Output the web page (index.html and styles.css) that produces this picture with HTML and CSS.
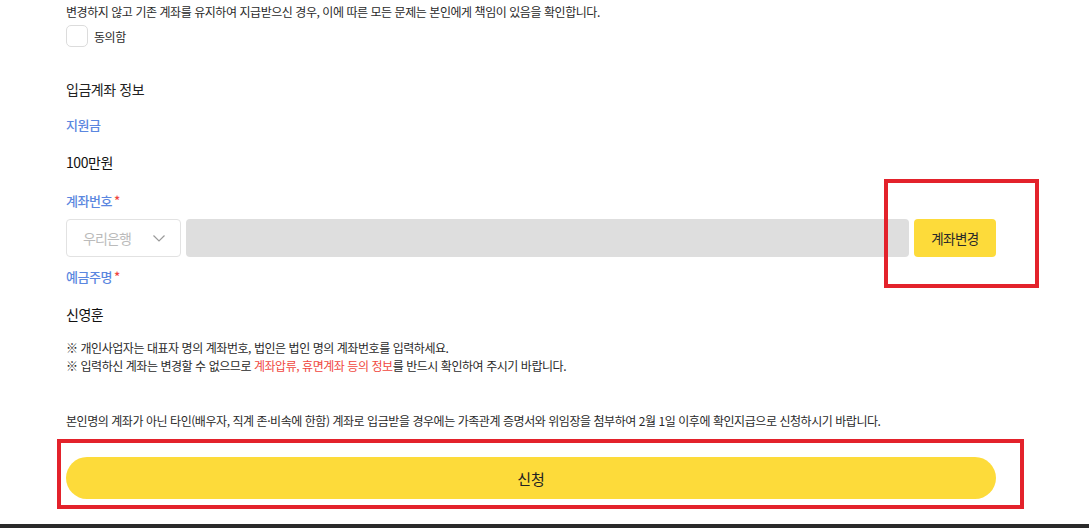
FILE: index.html
```html
<!DOCTYPE HTML>
<html lang="ko">

<head>
    <meta charset="utf-8">
    <meta name="viewport" content="width=device-width, initial-scale=1">
    <title>지원금 신청</title>
    <link rel="stylesheet" href="styles.css">
</head>

<body>
    <div class="wrap">
        <p class="agree-text">변경하지 않고 기존 계좌를 유지하여 지급받으신 경우, 이에 따른 모든 문제는 본인에게 책임이 있음을 확인합니다.</p>
        <label class="check">
            <input type="checkbox">
            <span class="check-box"></span>
            <span class="check-label">동의함</span>
        </label>

        <h3 class="section-title">입금계좌 정보</h3>

        <div class="field-label">지원금</div>
        <div class="field-value amount">100만원</div>

        <div class="field-label account-label">계좌번호<span class="req">*</span></div>
        <div class="account-row">
            <div class="bank-select">
                <span>우리은행</span>
                <svg width="12" height="7" viewBox="0 0 12 7"><path d="M0.5 0.5 L6 6 L11.5 0.5" fill="none" stroke="#9a9a9a" stroke-width="1.2"/></svg>
            </div>
            <input type="text" class="account-input" disabled>
            <button class="btn-change">계좌변경</button>
        </div>

        <div class="field-label holder-label">예금주명<span class="req">*</span></div>
        <div class="field-value holder">신영훈</div>

        <ul class="notes">
            <li>※ 개인사업자는 대표자 명의 계좌번호, 법인은 법인 명의 계좌번호를 입력하세요.</li>
            <li>※ 입력하신 계좌는 변경할 수 없으므로 <em>계좌압류, 휴면계좌 등의 정보</em>를 반드시 확인하여 주시기 바랍니다.</li>
        </ul>

        <p class="other-notice">본인명의 계좌가 아닌 타인(배우자, 직계 존·비속에 한함) 계좌로 입금받을 경우에는 가족관계 증명서와 위임장을 첨부하여 2월 1일 이후에 확인지급으로 신청하시기 바랍니다.</p>

        <button class="btn-submit">신청</button>
    </div>
    <div class="bottom-bar"></div>

    <!-- annotation boxes drawn over the capture -->
    <div class="mark mark-change"></div>
    <div class="mark mark-submit"></div>
</body>

</html>
```

FILE: styles.css
```css
html {
    font-family: "Noto Sans CJK KR", "Noto Sans", sans-serif;
    color: #222;
}

body {
    margin: 0px;
    position: relative;
    overflow: hidden;
    height: 528px;
}

.wrap {
    width: 930px;
    padding: 3px 0 0 66px;
    letter-spacing: -0.028em;
}

p, ul, h3 {
    margin: 0;
    padding: 0;
}

.agree-text {
    font-size: 12px;
    line-height: 18px;
    color: #2a2a2a;
}

.check {
    display: flex;
    align-items: center;
    margin-top: 4px;
    height: 22px;
    cursor: pointer;
}

.check input {
    display: none;
}

.check-box {
    width: 20px;
    height: 20px;
    border: 1px solid #dcdcdc;
    border-radius: 5px;
    background: #fff;
}

.check-label {
    margin-left: 6px;
    font-size: 12px;
    color: #2a2a2a;
}

.section-title {
    margin-top: 32px;
    font-size: 14px;
    line-height: 20px;
    font-weight: normal;
    color: #222;
}

.field-label {
    margin-top: 16px;
    font-size: 13px;
    line-height: 20px;
    font-weight: 500;
    color: #5b87e0;
}

.req {
    color: #f0473e;
    margin-left: 2px;
}

.field-value {
    font-size: 14px;
    line-height: 20px;
    color: #111;
}

.amount {
    margin-top: 17px;
}

.account-label {
    margin-top: 19px;
}

.account-row {
    display: flex;
    gap: 5px;
    margin-top: 8px;
    height: 38px;
}

.bank-select {
    box-sizing: border-box;
    width: 115px;
    display: flex;
    align-items: center;
    justify-content: space-between;
    padding: 0 15px 0 16px;
    border: 1px solid #e2e2e2;
    border-radius: 4px;
    font-size: 14px;
    letter-spacing: -0.06em;
    color: #bbb;
}

.account-input {
    flex: 1;
    border: 0;
    border-radius: 4px;
    background: #dedede;
}

.btn-change {
    width: 82px;
    border: 0;
    border-radius: 4px;
    background: #fddb3a;
    font-family: inherit;
    font-size: 13.5px;
    letter-spacing: -0.04em;
    color: #2a2a2a;
}

.holder-label {
    margin-top: 10px;
}

.holder {
    margin-top: 17px;
}

.notes {
    list-style: none;
    margin-top: 15px;
    font-size: 12px;
    line-height: 18px;
    color: #2a2a2a;
}

.notes em {
    font-style: normal;
    color: #f0473e;
}

.other-notice {
    margin-top: 37px;
    font-size: 12px;
    line-height: 18px;
    color: #2a2a2a;
}

.btn-submit {
    display: block;
    width: 930px;
    height: 42px;
    margin-top: 27px;
    border: 0;
    border-radius: 21px;
    background: #fddb3a;
    font-family: inherit;
    font-size: 15px;
    color: #222;
}

.bottom-bar {
    margin-top: 25px;
    height: 4px;
    background: #2a2a2a;
}

.mark {
    position: absolute;
    box-sizing: border-box;
    border: 4px solid #e3222b;
}

.mark-change {
    left: 884px;
    top: 179px;
    width: 155px;
    height: 109px;
}

.mark-submit {
    left: 57px;
    top: 439px;
    width: 967px;
    height: 70px;
}
```
